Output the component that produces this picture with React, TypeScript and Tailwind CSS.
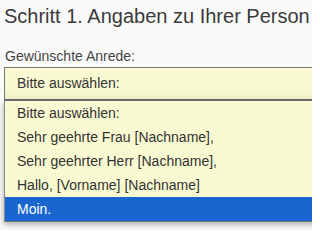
import React from "react";

export default function App() {
  const items = [
    "Bitte auswählen:",
    "Sehr geehrte Frau [Nachname],",
    "Sehr geehrter Herr [Nachname],",
    "Hallo, [Vorname] [Nachname]",
    "Moin.",
  ];
  return (
    <div
      className="relative w-[312px] h-[230px] overflow-hidden bg-[#fafafa] text-[#333]"
      style={{ fontFamily: '"Liberation Sans", Arial, sans-serif' }}
    >
      <div className="pl-[4px] pt-[4px]">
        <h1 className="text-[20px] leading-[24px] whitespace-nowrap text-[#3a3a3a]">
          Schritt 1. Angaben zu Ihrer Person
        </h1>
        <div className="mt-[20px] text-[14px] leading-[16px] text-[#444] pl-[1px]">
          Gewünschte Anrede:
        </div>
        <div className="mt-[3px] w-[320px] h-[34px] border border-[#777] border-b-2 border-b-[#6e6e6e] bg-gradient-to-b from-[#fafad2] from-70% to-[#efefc8] flex items-center pl-[12px] text-[14px]">
          Bitte auswählen:
        </div>
        <div className="mt-[14px] pl-[9px] text-[14px] leading-[18px] text-[#555] whitespace-nowrap">
          [optional] Straße und Hausnummer
        </div>
      </div>
      <div className="absolute left-[4px] top-[101px] w-[330px] bg-[#fafad2] border-l border-[#8a8a8a] border-b border-b-[#777] shadow-[0_2px_6px_rgba(0,0,0,0.35)]">
        {items.map((t, i) => (
          <div
            key={i}
            className={
              i === 4
                ? "h-[24px] flex items-center pl-[12px] text-[14px] bg-[#1a66d1] text-white"
                : "h-[24px] flex items-center pl-[12px] text-[14px] text-[#333]"
            }
          >
            {t}
          </div>
        ))}
      </div>
    </div>
  );
}
